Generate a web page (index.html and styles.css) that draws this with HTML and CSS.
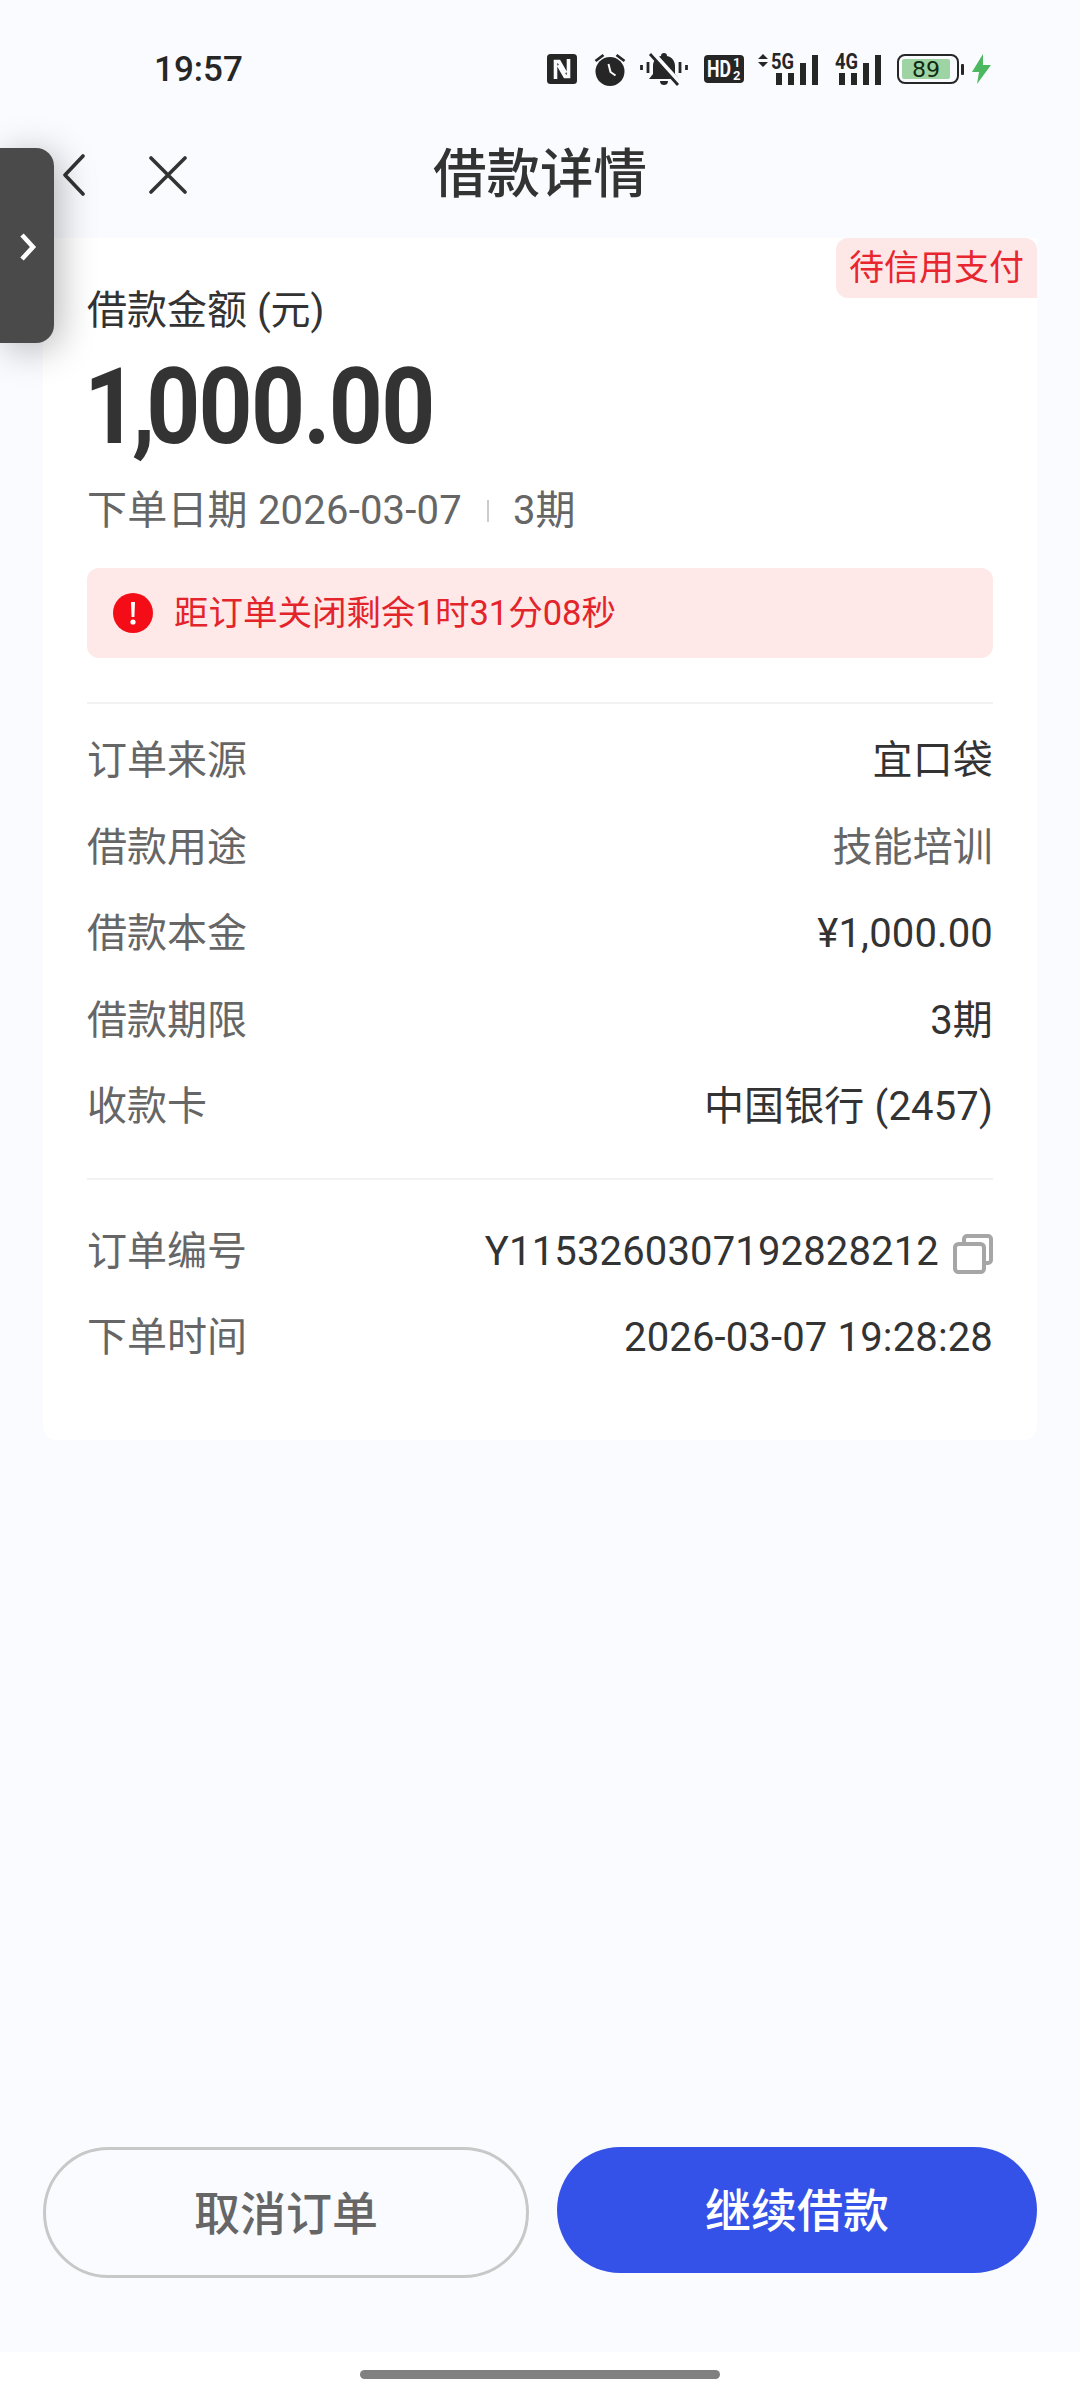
FILE: index.html
```html
<!DOCTYPE html>
<html lang="zh-CN">
<head>
    <meta charset="UTF-8">
    <meta name="viewport" content="width=device-width, initial-scale=1.0">
    <title>借款详情</title>
    <link rel="stylesheet" href="styles.css">
</head>
<body>
    <div class="page">
        <!-- status bar -->
        <div class="status-bar">
            <span class="clock">19:57</span>
            <div class="status-icons">
                <svg class="ic-nfc" width="30" height="30" viewBox="0 0 30 30">
                    <rect width="30" height="30" rx="3.5" fill="#262626"/>
                    <path d="M8.5 25V7.5h3.5l6.5 11.5M21.5 5v17.5H18L11.5 11" fill="none" stroke="#fafbff" stroke-width="3.6"/>
                </svg>
                <svg class="ic-alarm" width="32" height="34" viewBox="0 0 32 34">
                    <circle cx="16" cy="19.5" r="14.5" fill="#262626"/>
                    <path d="M1.5 9l8-6M30.5 9l-8-6" stroke="#262626" stroke-width="2.8"/>
                    <path d="M14.5 12l2 8 5 3.5" fill="none" stroke="#fafbff" stroke-width="2"/>
                </svg>
                <svg class="ic-bell" width="48" height="34" viewBox="0 0 48 34">
                    <path d="M24 1c2 0 3 1 3 3 5 1 8 5 8 10v8l4 5H9l4-5v-8c0-5 3-9 8-10 0-2 1-3 3-3zM20 29h8c0 3-2 4-4 4s-4-1-4-4z" fill="#262626"/>
                    <path d="M11 0l28 31" stroke="#fafbff" stroke-width="6"/>
                    <path d="M10 2l28 31" stroke="#262626" stroke-width="2.8"/>
                    <path d="M1.5 13v5M8 10v11M40 10v11M46.5 13v5" stroke="#262626" stroke-width="2.8"/>
                </svg>
                <svg class="ic-hd" width="40" height="28" viewBox="0 0 40 28">
                    <rect width="40" height="28" rx="4" fill="#262626"/>
                    <text x="3" y="22" class="svg-hd" textLength="24" lengthAdjust="spacingAndGlyphs">HD</text>
                    <text x="29" y="12" class="svg-sub">1</text>
                    <text x="29" y="25" class="svg-sub">2</text>
                </svg>
                <svg class="ic-sig5" width="60" height="32" viewBox="0 0 60 32">
                    <path d="M0 6l5-5 5 5zM0 9h10l-5 5z" fill="#262626"/>
                    <text x="13" y="16" class="svg-net" textLength="23" lengthAdjust="spacingAndGlyphs">5G</text>
                    <path d="M18 20h6v12h-6zM30 20h6v12h-6zM42 10h6v22h-6zM54 2h6v30h-6z" fill="#262626"/>
                </svg>
                <svg class="ic-sig4" width="46" height="32" viewBox="0 0 46 32">
                    <text x="0" y="16" class="svg-net" textLength="23" lengthAdjust="spacingAndGlyphs">4G</text>
                    <path d="M4 20h6v12H4zM16 20h6v12h-6zM28 10h6v22h-6zM40 2h6v30h-6z" fill="#262626"/>
                </svg>
                <svg class="ic-batt" width="67" height="30" viewBox="0 0 67 30">
                    <rect x="1" y="1" width="60" height="28" rx="7" fill="none" stroke="#262626" stroke-width="2"/>
                    <rect x="5" y="5" width="48" height="20" rx="2" fill="#9ed3a3"/>
                    <text x="29" y="23" class="svg-batt">89</text>
                    <rect x="64" y="10" width="3" height="11" rx="1" fill="#262626"/>
                </svg>
                <svg class="ic-bolt" width="19" height="30" viewBox="0 0 19 30">
                    <path d="M11 0L0 18h7L5 30l14-19h-8z" fill="#4cb860"/>
                </svg>
            </div>
        </div>

        <!-- nav -->
        <div class="nav">
            <svg class="nav-back" width="24" height="42" viewBox="0 0 24 42">
                <path d="M21 2L3 21l18 19" fill="none" stroke="#333" stroke-width="3.6" stroke-linecap="round" stroke-linejoin="round"/>
            </svg>
            <svg class="nav-close" width="38" height="38" viewBox="0 0 38 38">
                <path d="M2 2l34 34M36 2L2 36" fill="none" stroke="#333" stroke-width="3.6" stroke-linecap="round"/>
            </svg>
            <h1 class="nav-title">借款详情</h1>
        </div>

        <!-- card -->
        <div class="card">
            <span class="tag">待信用支付</span>
            <div class="amount-label">借款金额 (元)</div>
            <div class="amount">1<span class="amount-comma">,</span>000.00</div>
            <div class="meta">
                <span>下单日期 2026-03-07</span>
                <i class="meta-sep"></i>
                <span>3期</span>
            </div>
            <div class="notice">
                <svg width="40" height="40" viewBox="0 0 40 40">
                    <circle cx="20" cy="20" r="20" fill="#f40d17"/>
                    <path d="M18 9h4l-.6 15h-2.8z" fill="#fff"/>
                    <circle cx="20" cy="29" r="2.6" fill="#fff"/>
                </svg>
                <span>距订单关闭剩余1时31分08秒</span>
            </div>

            <div class="rows rows-first">
                <div class="row"><span class="row-label">订单来源</span><span class="row-value">宜口袋</span></div>
                <div class="row"><span class="row-label">借款用途</span><span class="row-value row-value-muted">技能培训</span></div>
                <div class="row"><span class="row-label">借款本金</span><span class="row-value">¥1,000.00</span></div>
                <div class="row"><span class="row-label">借款期限</span><span class="row-value">3期</span></div>
                <div class="row"><span class="row-label">收款卡</span><span class="row-value">中国银行 (2457)</span></div>
            </div>

            <div class="rows rows-second">
                <div class="row">
                    <span class="row-label">订单编号</span>
                    <span class="row-value row-value-copy">Y1153260307192828212
                        <svg width="40" height="40" viewBox="0 0 40 40">
                            <path d="M11 9V5a3 3 0 0 1 3-3h21a3 3 0 0 1 3 3v21a3 3 0 0 1-3 3h-4" fill="none" stroke="#a6a6a6" stroke-width="4"/>
                            <rect x="2" y="10" width="29" height="28" rx="3.5" fill="none" stroke="#a6a6a6" stroke-width="4"/>
                        </svg>
                    </span>
                </div>
                <div class="row"><span class="row-label">下单时间</span><span class="row-value">2026-03-07 19:28:28</span></div>
            </div>
        </div>

        <!-- actions -->
        <div class="actions">
            <button class="btn btn-cancel">取消订单</button>
            <button class="btn btn-go">继续借款</button>
        </div>

        <div class="home-area"><div class="home-bar"></div></div>

        <!-- floating side tab -->
        <div class="side-tab">
            <svg width="18" height="30" viewBox="0 0 18 30">
                <path d="M3 3l11 12L3 27" fill="none" stroke="#fff" stroke-width="4.6"/>
            </svg>
        </div>
    </div>
</body>
</html>
```

FILE: styles.css
```css
* {
    margin: 0;
    padding: 0;
    box-sizing: border-box;
}

body {
    background: #fafbff;
    color: #333;
    font-family: Roboto, "Noto Sans CJK SC", sans-serif;
}

.page {
    position: relative;
    width: 1080px;
    height: 2400px;
    display: flex;
    flex-direction: column;
    overflow: hidden;
}

/* status bar */
.status-bar {
    height: 132px;
    padding: 50px 0 0 154px;
    display: flex;
    align-items: flex-start;
    justify-content: space-between;
}

.clock {
    font-size: 35px;
    font-weight: 500;
    line-height: 40px;
    color: #262626;
}

.status-icons {
    display: flex;
    align-items: center;
    height: 38px;
    margin: 0 89px 0 0;
}

.status-icons svg {
    overflow: visible;
}

.ic-alarm { margin-left: 17px; }
.ic-bell { margin-left: 14px; }
.ic-hd { margin-left: 16px; }
.ic-sig5 { margin-left: 14px; }
.ic-sig4 { margin-left: 17px; }
.ic-batt { margin-left: 16px; }
.ic-bolt { margin-left: 8px; }

.svg-hd {
    font: 700 23px Roboto, sans-serif;
    fill: #fafbff;
}

.svg-sub {
    font: 700 13px Roboto, sans-serif;
    fill: #fafbff;
}

.svg-net {
    font: 700 22px Roboto, sans-serif;
    fill: #262626;
}

.svg-batt {
    font: 400 22px "DejaVu Sans", sans-serif;
    fill: #0e2a12;
    text-anchor: middle;
}

/* nav */
.nav {
    height: 106px;
    padding: 0 0 20px 62px;
    display: flex;
    align-items: center;
    position: relative;
}

.nav-close {
    margin-left: 63px;
}

.nav-title {
    position: absolute;
    left: 0;
    right: 0;
    text-align: center;
    font-size: 53.5px;
    font-weight: 500;
    line-height: 74px;
    color: #333;
}

/* card */
.card {
    position: relative;
    margin: 0 43px;
    height: 1202px;
    padding: 47px 44px 0;
    background: #fff;
    border-radius: 0 0 14px 14px;
}

.tag {
    position: absolute;
    top: 0;
    right: 0;
    width: 201px;
    height: 60px;
    background: #fde7e7;
    color: #e8262f;
    font-size: 35px;
    line-height: 62px;
    text-align: center;
    border-radius: 12px 12px 0 12px;
}

.amount-label {
    font-size: 40px;
    line-height: 52px;
    color: #333;
}

.amount {
    margin: 10px 0 0 -3px;
    font-size: 106px;
    font-weight: 700;
    line-height: 120px;
    letter-spacing: -2px;
    color: #333;
    transform: scaleX(0.89);
    transform-origin: left center;
}

.amount-comma {
    margin: 0 -8px 0 -5px;
}

.meta {
    margin-top: 16px;
    display: flex;
    align-items: center;
    font-size: 40px;
    line-height: 56px;
    letter-spacing: 0.2px;
    color: #666;
}

.meta-sep {
    width: 2px;
    height: 22px;
    margin: 0 24px 0 25px;
    background: #ccc;
}

.notice {
    margin-top: 29px;
    height: 90px;
    padding: 0 26px 6px;
    display: flex;
    align-items: center;
    gap: 21px;
    background: #fee8e8;
    border-radius: 12px;
    color: #e3242b;
    font-size: 34.5px;
}

.notice svg {
    margin-top: 6px;
}

.rows {
    border-top: 2px solid #f2f2f2;
}

.rows-first {
    margin-top: 44px;
    padding: 14px 0 27px;
}

.rows-second {
    padding: 29px 0 0;
}

.row {
    height: 86.5px;
    display: flex;
    align-items: center;
    justify-content: space-between;
    font-size: 40px;
    line-height: 56px;
}

.row-label {
    color: #666;
}

.row-value {
    color: #333;
    letter-spacing: 0.15px;
}

.row-value-muted {
    color: #666;
}

.row-value-copy {
    display: flex;
    align-items: center;
    gap: 14px;
}

.row-value-copy svg {
    margin-top: 4px;
}

/* actions */
.actions {
    margin-top: auto;
    padding: 0 42px 0 43px;
    height: 205px;
    display: flex;
    align-items: flex-start;
    gap: 28px;
}

.btn {
    border-radius: 66px;
    font-family: inherit;
    font-size: 46px;
    font-weight: 500;
}

.btn-cancel {
    width: 486px;
    height: 131px;
    padding-bottom: 6px;
    background: transparent;
    border: 3px solid #c8c8c8;
    color: #666;
}

.btn-go {
    width: 480px;
    height: 126px;
    padding-bottom: 6px;
    background: #3552e8;
    border: none;
    color: #fff;
}

.home-area {
    height: 48px;
    background: #fff;
    padding-top: 18px;
}

.home-bar {
    width: 360px;
    height: 9px;
    margin: 0 auto;
    border-radius: 5px;
    background: #808080;
}

/* floating tab */
.side-tab {
    position: absolute;
    left: 0;
    top: 148px;
    width: 54px;
    height: 195px;
    padding: 84px 0 0 19px;
    background: #4a4a4a;
    border-radius: 0 18px 18px 0;
    box-shadow: 6px 6px 36px rgba(0, 0, 0, 0.28);
}

.side-tab svg {
    display: block;
}
```
